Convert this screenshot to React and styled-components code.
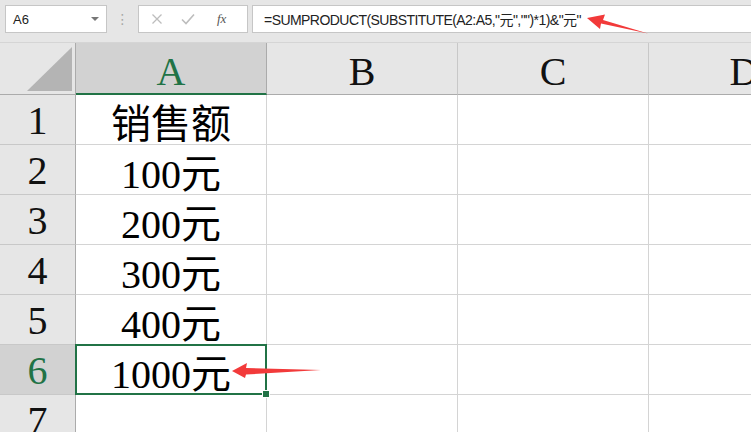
import React from "react";
import styled, { createGlobalStyle } from "styled-components";

const GlobalStyle = createGlobalStyle`
  html, body { margin: 0; padding: 0; background: #ffffff; }
  body { width: 751px; height: 432px; overflow: hidden; }
`;

const Page = styled.div`
  position: relative;
  width: 751px;
  height: 432px;
  overflow: hidden;
  background: #ffffff;
`;

const Toolbar = styled.div`
  display: flex;
  align-items: flex-start;
  height: 43px;
  box-sizing: border-box;
  padding: 5px 0 0 5px;
  background: #e6e6e6;
  border-bottom: 1px solid #d5d5d5;
`;

const NameBox = styled.div`
  display: flex;
  align-items: center;
  justify-content: space-between;
  width: 102px;
  height: 28px;
  box-sizing: border-box;
  padding: 0 7px 0 7px;
  background: #ffffff;
  border: 1px solid #c6c6c6;
  font-family: "Liberation Sans", Arial, sans-serif;
  font-size: 13px;
  color: #222;
`;

const Caret = styled.span`
  width: 0;
  height: 0;
  border-left: 4px solid transparent;
  border-right: 4px solid transparent;
  border-top: 4px solid #777;
`;

const Grip = styled.div`
  width: 31px;
  height: 28px;
  display: flex;
  align-items: center;
  justify-content: center;
  color: #a8a8a8;
  font-family: "DejaVu Sans", sans-serif;
  font-size: 14px;
`;

const FxBox = styled.div`
  display: flex;
  align-items: center;
  width: 110px;
  height: 28px;
  box-sizing: border-box;
  padding: 0 0 0 12px;
  background: #ffffff;
  border: 1px solid #c6c6c6;
  gap: 18px;
`;

const FxText = styled.span`
  font-family: "Liberation Serif", serif;
  font-style: italic;
  font-size: 13px;
  color: #555;
  margin-left: 4px;
`;

const FormulaBox = styled.div`
  flex: 1;
  height: 28px;
  margin-left: 4px;
  box-sizing: border-box;
  padding: 0 0 0 11px;
  display: flex;
  align-items: center;
  background: #ffffff;
  border: 1px solid #c6c6c6;
  border-right: none;
  font-family: "Liberation Sans", "Noto Sans CJK SC", sans-serif;
  font-size: 14px;
  letter-spacing: -0.55px;
  color: #222;
  white-space: nowrap;
`;

const Sheet = styled.div`
  display: grid;
  grid-template-columns: 76px 191px 191px 191px 191px;
  grid-template-rows: 52px repeat(7, 50px);
`;

const Corner = styled.div`
  position: relative;
  background: #e6e6e6;
  border-right: 1px solid #ababab;
  border-bottom: 1px solid #ababab;
  box-sizing: border-box;
  &::after {
    content: "";
    position: absolute;
    right: 3px;
    bottom: 3px;
    width: 0;
    height: 0;
    border-left: 45px solid transparent;
    border-bottom: 44px solid #b4b4b4;
  }
`;

const ColHead = styled.div`
  display: flex;
  align-items: center;
  justify-content: center;
  box-sizing: border-box;
  padding-top: 6px;
  background: ${p => (p.$active ? "#d2d2d2" : "#e6e6e6")};
  color: ${p => (p.$active ? "#217346" : "#111")};
  border-right: 1px solid ${p => (p.$active ? "#ababab" : "#c8c8c8")};
  border-bottom: ${p => (p.$active ? "2px solid #217346" : "1px solid #ababab")};
  font-family: "Liberation Serif", serif;
  font-size: 40px;
`;

const RowHead = styled.div`
  display: flex;
  align-items: center;
  justify-content: center;
  box-sizing: border-box;
  padding-top: 2px;
  background: ${p => (p.$active ? "#d2d2d2" : "#e6e6e6")};
  color: ${p => (p.$active ? "#217346" : "#111")};
  border-right: 1px solid #ababab;
  border-bottom: 1px solid #c8c8c8;
  font-family: "Liberation Serif", serif;
  font-size: 40px;
`;

const Cell = styled.div`
  position: relative;
  display: flex;
  align-items: center;
  justify-content: center;
  box-sizing: border-box;
  padding-top: 2px;
  border-right: 1px solid #d4d4d4;
  border-bottom: 1px solid #d4d4d4;
  font-family: "Liberation Serif", "Noto Sans CJK SC", serif;
  font-size: 40px;
  color: #000;
  white-space: nowrap;
  z-index: ${p => (p.$selected ? 2 : "auto")};
`;

const Selection = styled.div`
  position: absolute;
  left: -1px;
  top: -1px;
  right: -1px;
  bottom: -1px;
  border: 2px solid #217346;
  pointer-events: none;
  &::after {
    content: "";
    position: absolute;
    right: -5px;
    bottom: -5px;
    width: 6px;
    height: 6px;
    background: #217346;
    border: 1px solid #ffffff;
  }
`;

const Arrow = styled.svg`
  position: absolute;
  left: 0;
  top: 0;
  z-index: 3;
  pointer-events: none;
`;

const columns = ["A", "B", "C", "D"];
const values = ["销售额", "100元", "200元", "300元", "400元", "1000元", ""];

function App() {
  return (
    <Page>
      <GlobalStyle />
      <Toolbar>
        <NameBox>
          <span>A6</span>
          <Caret />
        </NameBox>
        <Grip>⋮</Grip>
        <FxBox>
          <svg width="12" height="12" viewBox="0 0 12 12">
            <path d="M1.5 1.5 L10.5 10.5 M10.5 1.5 L1.5 10.5" stroke="#bdbdbd" strokeWidth="1.3" fill="none" />
          </svg>
          <svg width="14" height="12" viewBox="0 0 14 12">
            <path d="M1 6.5 L5 10.5 L13 1.5" stroke="#bdbdbd" strokeWidth="1.6" fill="none" />
          </svg>
          <FxText>fx</FxText>
        </FxBox>
        <FormulaBox>=SUMPRODUCT(SUBSTITUTE(A2:A5,"元","")*1)&amp;"元"</FormulaBox>
      </Toolbar>
      <Sheet>
        <Corner />
        {columns.map(c => (
          <ColHead key={c} $active={c === "A"}>{c}</ColHead>
        ))}
        {values.map((v, i) => (
          <React.Fragment key={i}>
            <RowHead $active={i === 5}>{i + 1}</RowHead>
            <Cell $selected={i === 5}>
              {v}
              {i === 5 && <Selection />}
            </Cell>
            <Cell />
            <Cell />
            <Cell />
          </React.Fragment>
        ))}
      </Sheet>
      <Arrow width="751" height="432" viewBox="0 0 751 432">
        <path d="M587 18 L605 14.5 L603 20 L648 33.5 L601 23.5 L600 29 Z" fill="#f23a3a" />
        <path d="M232 371 L247 363 L246 368 L321 370 L246 374.5 L245 378 Z" fill="#f23a3a" />
      </Arrow>
    </Page>
  );
}

export default App;
